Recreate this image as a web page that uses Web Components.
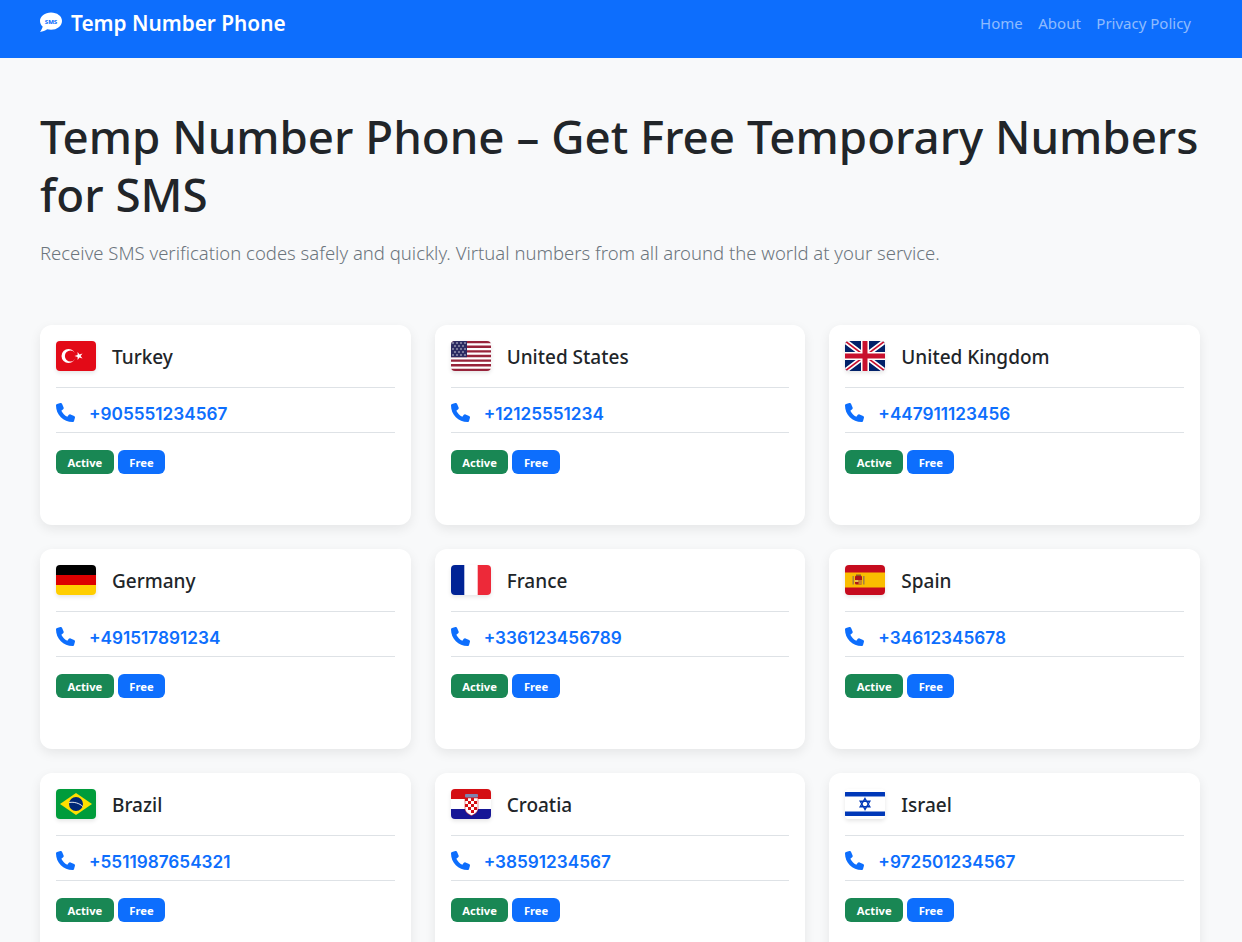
<!DOCTYPE html>
<html lang="en">
<head>
<meta charset="utf-8">
<title>Temp Number Phone</title>
<style>
  html, body { margin: 0; background: #f8f9fa; }
  body { font-family: "Noto Sans", "Open Sans", sans-serif; color: #212529; }
</style>
</head>
<body>
<site-navbar brand="Temp Number Phone">
  <a href="#">Home</a>
  <a href="#">About</a>
  <a href="#">Privacy Policy</a>
</site-navbar>
<page-main>
  <hero-head slot="head" title="Temp Number Phone – Get Free Temporary Numbers for SMS">Receive SMS verification codes safely and quickly. Virtual numbers from all around the world at your service.</hero-head>
  <number-card code="tr" country="Turkey" phone="+905551234567"></number-card>
  <number-card code="us" country="United States" phone="+12125551234"></number-card>
  <number-card code="gb" country="United Kingdom" phone="+447911123456"></number-card>
  <number-card code="de" country="Germany" phone="+491517891234"></number-card>
  <number-card code="fr" country="France" phone="+336123456789"></number-card>
  <number-card code="es" country="Spain" phone="+34612345678"></number-card>
  <number-card code="br" country="Brazil" phone="+5511987654321"></number-card>
  <number-card code="hr" country="Croatia" phone="+38591234567"></number-card>
  <number-card code="il" country="Israel" phone="+972501234567"></number-card>
</page-main>

<script>
// --- navbar ---
class SiteNavbar extends HTMLElement {
  connectedCallback() {
    if (this.shadowRoot) return;
    const shadow = this.attachShadow({ mode: 'open' });
    shadow.innerHTML = `
      <style>
        :host { display: flex; align-items: flex-start; justify-content: space-between;
                height: 58px; box-sizing: border-box; padding: 8px 51px 0 39px; background: #0d6efd; }
        .brand { display: flex; align-items: center; gap: 8px; height: 29px; color: #fff;
                 font-size: 20.8px; font-weight: 600; white-space: nowrap; }
        svg { width: 24px; height: 21px; display: block; margin-top: -1px; }
        nav { display: flex; gap: 15.500px; height: 30px; align-items: center; }
        ::slotted(a) { color: rgba(255,255,255,.55); text-decoration: none; font-size: 15px; }
      </style>
      <div class="brand">
        <svg viewBox="0 0 46 42">
          <path fill="#fff" d="M23 1C10.900 1 1 8.600 1 18c0 4.300 2 8.200 5.300 11.200C5.600 33 3.400 36.800 1 40c5.300-.4 10.600-2.500 14.300-5.300 2.400.6 5 .9 7.700.9 12.100 0 22-7.600 22-17.600S35.100 1 23 1z"/>
          <text x="23" y="23" text-anchor="middle" font-size="12" font-weight="800" fill="#0d6efd" font-family="Noto Sans, sans-serif">SMS</text>
        </svg>
        <span>${this.getAttribute('brand')}</span>
      </div>
      <nav><slot></slot></nav>`;
  }
}

// --- page shell with the three column grid ---
class PageMain extends HTMLElement {
  connectedCallback() {
    if (this.shadowRoot) return;
    const shadow = this.attachShadow({ mode: 'open' });
    shadow.innerHTML = `
      <style>
        :host { display: block; padding: 49px 42px 24px 40px; }
        .grid { display: grid; grid-template-columns: repeat(3, 1fr); gap: 24px; margin-top: 57px; }
      </style>
      <slot name="head"></slot>
      <div class="grid"><slot></slot></div>`;
  }
}

class HeroHead extends HTMLElement {
  connectedCallback() {
    if (this.shadowRoot) return;
    const shadow = this.attachShadow({ mode: 'open' });
    shadow.innerHTML = `
      <style>
        :host { display: block; }
        h1 { margin: 0 0 15px; font-size: 45.700px; font-weight: 500; line-height: 58px; color: #212529; }
        p { margin: 0; font-size: 18.500px; font-weight: 300; line-height: 30px; color: #6c757d; }
      </style>
      <h1>${this.getAttribute('title')}</h1>
      <p><slot></slot></p>`;
  }
}

// --- flags, small svg drawings by country code ---
const FLAGS = {
  tr: `<rect width="40" height="30" fill="#e30a17"/>
       <circle cx="12.500" cy="15" r="7" fill="#fff"/><circle cx="14.500" cy="15" r="5.600" fill="#e30a17"/>
       <polygon fill="#fff" points="18.500,15 21.600,16 21.600,19 23.500,16.500 26.500,17.400 24.600,15 26.500,12.600 23.500,13.500 21.600,11 21.600,14"/>`,
  us: `<rect width="40" height="30" fill="#fff"/>
       <path stroke="#97233a" stroke-width="2.310" d="M0 1.150h40M0 5.770h40M0 10.390h40M0 15h40M0 19.620h40M0 24.240h40M0 28.850h40"/>
       <rect width="16" height="16.200" fill="#2c2c62"/>
       <g fill="#fff"><circle cx="2" cy="2" r=".7"/><circle cx="6" cy="2" r=".7"/><circle cx="10" cy="2" r=".7"/><circle cx="14" cy="2" r=".7"/>
       <circle cx="4" cy="5" r=".7"/><circle cx="8" cy="5" r=".7"/><circle cx="12" cy="5" r=".7"/>
       <circle cx="2" cy="8" r=".7"/><circle cx="6" cy="8" r=".7"/><circle cx="10" cy="8" r=".7"/><circle cx="14" cy="8" r=".7"/>
       <circle cx="4" cy="11" r=".7"/><circle cx="8" cy="11" r=".7"/><circle cx="12" cy="11" r=".7"/>
       <circle cx="2" cy="14" r=".7"/><circle cx="6" cy="14" r=".7"/><circle cx="10" cy="14" r=".7"/><circle cx="14" cy="14" r=".7"/></g>`,
  gb: `<rect width="40" height="30" fill="#012169"/>
       <path stroke="#fff" stroke-width="5" d="M0 0l40 30M40 0L0 30"/>
       <path stroke="#c8102e" stroke-width="1.700" d="M0 0l40 30M40 0L0 30"/>
       <path stroke="#fff" stroke-width="8" d="M20 0v30M0 15h40"/>
       <path stroke="#c8102e" stroke-width="5" d="M20 0v30M0 15h40"/>`,
  de: `<rect width="40" height="10" fill="#000"/><rect y="10" width="40" height="10" fill="#d00"/><rect y="20" width="40" height="10" fill="#ffce00"/>`,
  fr: `<rect width="40" height="30" fill="#fff"/><rect width="13.300" height="30" fill="#002395"/><rect x="26.700" width="13.300" height="30" fill="#ed2939"/>`,
  es: `<rect width="40" height="30" fill="#c60b1e"/><rect y="7.500" width="40" height="15" fill="#fabd00"/>
       <rect x="10" y="10.500" width="7" height="9" rx="1.500" fill="#ad1519"/><rect x="13.500" y="15" width="3.500" height="4.500" fill="#c8862a"/>
       <rect x="10" y="15" width="3.500" height="2" fill="#e8c05a"/><rect x="11" y="9.500" width="5" height="1.500" fill="#8a5a2a"/>
       <rect x="7.500" y="11" width="1.400" height="8.500" fill="#9c7a4a"/><rect x="18.100" y="11" width="1.400" height="8.500" fill="#9c7a4a"/>`,
  br: `<rect width="40" height="30" fill="#009c3b"/><polygon points="20,4 36,15 20,26 4,15" fill="#ffdf00"/>
       <circle cx="20" cy="15" r="7" fill="#002776"/><path d="M13.200 13.500c5-.8 10 .6 13.600 4" stroke="#fff" stroke-width=".9" fill="none"/>`,
  hr: `<rect width="40" height="30" fill="#fff"/><rect width="40" height="10" fill="#d40f14"/><rect y="20" width="40" height="10" fill="#171796"/>
       <path d="M14 9h13v10c0 4-3 6-6.500 7.500C17 25 14 23 14 19z" fill="#fff" stroke="#d40f14" stroke-width=".5"/>
       <path fill="#d40f14" d="M14 9h3v3h-3zM20 9h3v3h-3zM17 12h3v3h-3zM23 12h3v3h-3zM14 15h3v3h-3zM20 15h3v3h-3zM17 18h3v3h-3zM23 18h3v3h-3zM20 21h3v3h-3z"/>
       <rect x="14" y="5" width="13" height="3.500" rx="1" fill="#7d84b0"/>`,
  il: `<rect width="40" height="30" fill="#fff"/><rect y="3" width="40" height="4.500" fill="#0038b8"/><rect y="22.500" width="40" height="4.500" fill="#0038b8"/>
       <path fill="none" stroke="#0038b8" stroke-width="1.400" d="M20 9.500l4.800 8.200h-9.600zM20 20.500l-4.800-8.200h9.600z"/>`
};

class CountryFlag extends HTMLElement {
  connectedCallback() {
    if (this.shadowRoot) return;
    const shadow = this.attachShadow({ mode: 'open' });
    shadow.innerHTML = `
      <style>
        :host { display: block; width: 40px; height: 30px; flex: none; border-radius: 4px;
                overflow: hidden; box-shadow: 0 2px 4px rgba(0,0,0,.1); }
        svg { display: block; width: 40px; height: 30px; }
      </style>
      <svg viewBox="0 0 40 30">${FLAGS[this.getAttribute('code')] || ''}</svg>`;
  }
}

class StatusBadge extends HTMLElement {
  connectedCallback() {
    if (this.shadowRoot) return;
    const shadow = this.attachShadow({ mode: 'open' });
    shadow.innerHTML = `
      <style>
        :host { display: inline-flex; align-items: center; height: 24px; padding: 0 11.500px; border-radius: 6px;
                background: var(--badge-bg, #0d6efd); color: #fff; font-size: 11.200px; font-weight: 700; }
      </style>
      <slot></slot>`;
  }
}

// --- one phone number card ---
class NumberCard extends HTMLElement {
  connectedCallback() {
    if (this.shadowRoot) return;
    const shadow = this.attachShadow({ mode: 'open' });
    shadow.innerHTML = `
      <style>
        :host { display: block; height: 200px; box-sizing: border-box; padding: 16px; background: #fff;
                border-radius: 12px; box-shadow: 0 4px 12px rgba(0,0,0,.08); }
        .head { display: flex; align-items: center; gap: 16px; height: 46px; border-bottom: 1px solid #dee2e6; }
        .head country-flag { margin-bottom: 16px; }
        .head span { font-size: 19px; font-weight: 500; margin-bottom: 14px; }
        .phone { display: flex; align-items: center; gap: 14px; height: 44px; border-bottom: 1px solid #dee2e6;
                 color: #0d6efd; font-family: Inter, "Noto Sans", sans-serif; font-size: 17.200px; font-weight: 600; }
        .phone span { padding-top: 6px; }
        svg { width: 19px; height: 19px; fill: #0d6efd; margin-top: 5px; }
        .badges { display: flex; gap: 4px; margin-top: 17px; }
        .active { --badge-bg: #198754; }
      </style>
      <div class="head">
        <country-flag code="${this.getAttribute('code')}"></country-flag>
        <span>${this.getAttribute('country')}</span>
      </div>
      <div class="phone">
        <svg viewBox="0 0 512 512"><path d="M164.900 24.600c-7.700-18.600-28-28.500-47.400-23.200l-88 24C12.100 30.200 0 46 0 64C0 311.400 200.600 512 448 512c18 0 33.800-12.100 38.600-29.500l24-88c5.300-19.400-4.600-39.700-23.200-47.400l-96-40c-16.300-6.800-35.200-2.100-46.300 11.600L304.700 368C234.300 334.700 177.300 277.700 144 207.300L193.300 167c13.700-11.200 18.400-30 11.600-46.300l-40-96z"/></svg>
        <span>${this.getAttribute('phone')}</span>
      </div>
      <div class="badges">
        <status-badge class="active">Active</status-badge>
        <status-badge>Free</status-badge>
      </div>`;
  }
}

customElements.define('site-navbar', SiteNavbar);
customElements.define('page-main', PageMain);
customElements.define('hero-head', HeroHead);
customElements.define('country-flag', CountryFlag);
customElements.define('status-badge', StatusBadge);
customElements.define('number-card', NumberCard);
</script>
</body>
</html>
